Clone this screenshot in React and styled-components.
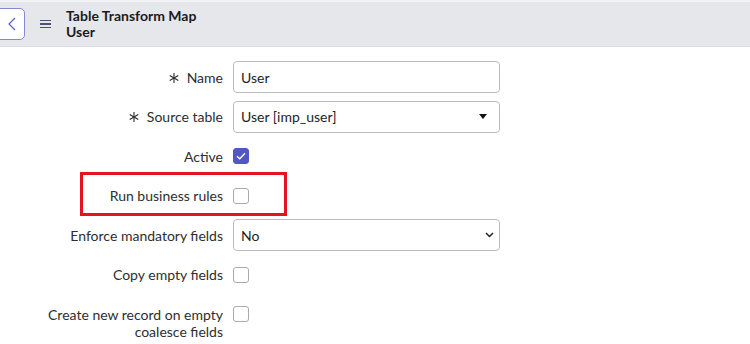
import React from "react";
import styled, { createGlobalStyle } from "styled-components";

const GlobalStyle = createGlobalStyle`
  html, body {
    margin: 0;
    padding: 0;
    background: #fff;
    font-family: Lato, "Open Sans", sans-serif;
    color: #2e2e2e;
    overflow: hidden;
  }
`;

const Page = styled.div`
  width: 750px;
  height: 344px;
  overflow: hidden;
  background: #fff;
`;

const Header = styled.header`
  display: flex;
  align-items: center;
  height: 44px;
  border-top: 2px solid #f2f2f4;
  border-bottom: 1px solid #dcdde1;
  background: #e6e7eb;
`;

const BackButton = styled.button`
  display: flex;
  align-items: center;
  justify-content: center;
  width: 33px;
  height: 32px;
  margin-left: -8px;
  padding: 0 0 0 6px;
  border: 1px solid #8488d6;
  border-radius: 5px;
  background: #fff;
  color: #5b5fc7;
`;

const MenuIcon = styled.span`
  display: flex;
  flex-direction: column;
  gap: 2px;
  width: 11px;
  margin-left: 15px;

  span {
    height: 1.5px;
    background: #4d5070;
  }
`;

const Title = styled.h1`
  margin: 0 0 0 15px;
  font-size: 14px;
  line-height: 16px;
  font-weight: 700;
  color: #1b1b1b;

  span {
    display: block;
  }
`;

const Form = styled.div`
  display: flex;
  flex-direction: column;
  gap: 7.5px;
  padding-top: 14px;
`;

const Row = styled.div`
  position: relative;
  display: grid;
  grid-template-columns: 223px 267px;
  column-gap: 10px;
  align-items: start;
  min-height: 32px;
`;

const Label = styled.label`
  display: flex;
  justify-content: flex-end;
  align-items: flex-start;
  gap: 8px;
  padding: 7.5px 0 0 40px;
  font-size: 14px;
  line-height: 17px;
  text-align: right;
  color: #2e2e2e;

  svg {
    flex: none;
    margin-top: 4px;
  }
`;

const TextInput = styled.div`
  display: flex;
  align-items: center;
  justify-content: space-between;
  box-sizing: border-box;
  height: 32px;
  padding: 0 ${(p) => p.$right || 12}px 0 7px;
  border: 1px solid #b9bbc0;
  border-radius: 4px;
  background: #fff;
  font-size: 14px;
  color: #1e1e1e;
`;

const Checkbox = styled.span`
  display: flex;
  align-items: center;
  justify-content: center;
  box-sizing: border-box;
  width: 16px;
  height: 16px;
  margin-top: 8px;
  border: 1px solid ${(p) => (p.$checked ? "#5357c4" : "#a9abb0")};
  border-radius: 3px;
  background: ${(p) => (p.$checked ? "#5357c4" : "#fff")};
`;

const Highlight = styled.div`
  position: absolute;
  left: 80px;
  top: -8px;
  width: 207px;
  height: 44px;
  box-sizing: border-box;
  border: 3px solid #e3141f;
  pointer-events: none;
`;

const Star = () => (
  <svg width="10" height="10" viewBox="0 0 10 10" stroke="#2e2e2e" strokeWidth="1.1">
    <line x1="5" y1="0" x2="5" y2="10" />
    <line x1="0.7" y1="2.5" x2="9.3" y2="7.5" />
    <line x1="0.7" y1="7.5" x2="9.3" y2="2.5" />
  </svg>
);

const Check = () => (
  <svg width="10" height="8" viewBox="0 0 10 8" fill="none" stroke="#fff" strokeWidth="1.3">
    <polyline points="1,4.2 3.8,6.8 9,1.2" />
  </svg>
);

function Field({ label, required, children, highlight }) {
  return (
    <Row>
      {highlight && <Highlight />}
      <Label>
        {required && <Star />}
        <span>{label}</span>
      </Label>
      <div>{children}</div>
    </Row>
  );
}

export default function App() {
  return (
    <Page>
      <GlobalStyle />
      <Header>
        <BackButton>
          <svg width="8" height="14" viewBox="0 0 8 14" fill="none" stroke="#5b5fc7" strokeWidth="1.2">
            <polyline points="7,1 1,7 7,13" />
          </svg>
        </BackButton>
        <MenuIcon>
          <span />
          <span />
          <span />
        </MenuIcon>
        <Title>
          <span>Table Transform Map</span>
          <span>User</span>
        </Title>
      </Header>
      <Form>
        <Field label="Name" required>
          <TextInput>User</TextInput>
        </Field>
        <Field label="Source table" required>
          <TextInput>
            User [imp_user]
            <svg width="8" height="5" viewBox="0 0 8 5">
              <polygon points="0,0 8,0 4,5" fill="#111" />
            </svg>
          </TextInput>
        </Field>
        <Field label="Active">
          <Checkbox $checked>
            <Check />
          </Checkbox>
        </Field>
        <Field label="Run business rules" highlight>
          <Checkbox />
        </Field>
        <Field label="Enforce mandatory fields">
          <TextInput $right={5}>
            No
            <svg width="9" height="6" viewBox="0 0 9 6" fill="none" stroke="#222" strokeWidth="1.5">
              <polyline points="1,1 4.5,4.5 8,1" />
            </svg>
          </TextInput>
        </Field>
        <Field label="Copy empty fields">
          <Checkbox />
        </Field>
        <Field label="Create new record on empty coalesce fields">
          <Checkbox />
        </Field>
      </Form>
    </Page>
  );
}
